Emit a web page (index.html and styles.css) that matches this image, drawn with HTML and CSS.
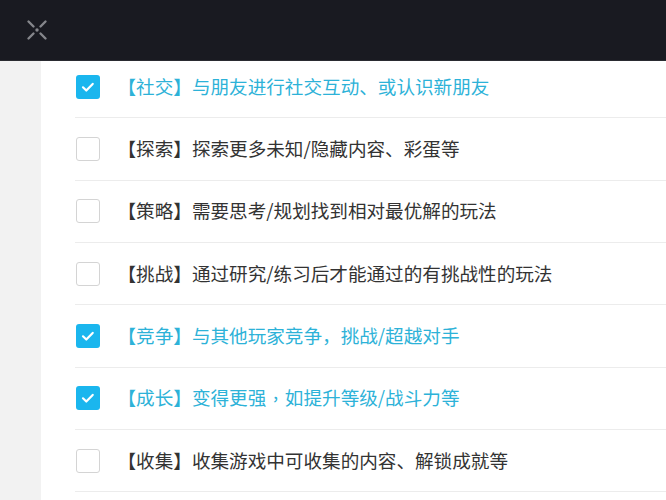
FILE: index.html
```html
<!DOCTYPE html>
<html lang="zh-CN">
<head>
<meta charset="utf-8">
<title>偏好选择</title>
<link rel="stylesheet" href="styles.css">
</head>
<body>
<header class="topbar">
  <button class="close-btn" aria-label="关闭">
    <svg width="24" height="24" viewBox="0 0 24 24">
      <g stroke="#85868b" stroke-width="2.4" stroke-linecap="round">
        <line x1="3.5" y1="3.5" x2="8.5" y2="8.5"/>
        <line x1="20.5" y1="3.5" x2="15.5" y2="8.5"/>
        <line x1="3.5" y1="20.5" x2="8.5" y2="15.5"/>
        <line x1="20.5" y1="20.5" x2="15.5" y2="15.5"/>
      </g>
      <circle cx="12" cy="12" r="1.7" fill="#85868b"/>
    </svg>
  </button>
</header>
<div class="layout">
  <aside class="side"></aside>
  <main class="content">
    <ul class="options">
      <li class="option checked">
        <span class="box"><svg viewBox="0 0 24 24" width="24" height="24"><path d="M7 12.3l3.3 3.2 6.4-6.6" fill="none" stroke="#fff" stroke-width="2.2" stroke-linecap="round" stroke-linejoin="round"/></svg></span>
        <span class="label">【社交】与朋友进行社交互动、或认识新朋友</span>
      </li>
      <li class="option">
        <span class="box"></span>
        <span class="label">【探索】探索更多未知/隐藏内容、彩蛋等</span>
      </li>
      <li class="option">
        <span class="box"></span>
        <span class="label">【策略】需要思考/规划找到相对最优解的玩法</span>
      </li>
      <li class="option">
        <span class="box"></span>
        <span class="label">【挑战】通过研究/练习后才能通过的有挑战性的玩法</span>
      </li>
      <li class="option checked">
        <span class="box"><svg viewBox="0 0 24 24" width="24" height="24"><path d="M7 12.3l3.3 3.2 6.4-6.6" fill="none" stroke="#fff" stroke-width="2.2" stroke-linecap="round" stroke-linejoin="round"/></svg></span>
        <span class="label">【竞争】与其他玩家竞争，挑战/超越对手</span>
      </li>
      <li class="option checked">
        <span class="box"><svg viewBox="0 0 24 24" width="24" height="24"><path d="M7 12.3l3.3 3.2 6.4-6.6" fill="none" stroke="#fff" stroke-width="2.2" stroke-linecap="round" stroke-linejoin="round"/></svg></span>
        <span class="label">【成长】变得更强<span class="mid-comma">,</span>如提升等级/战斗力等</span>
      </li>
      <li class="option">
        <span class="box"></span>
        <span class="label">【收集】收集游戏中可收集的内容、解锁成就等</span>
      </li>
    </ul>
  </main>
</div>
</body>
</html>
```
FILE: styles.css
```css
* {
  box-sizing: border-box;
}

html, body {
  margin: 0;
  padding: 0;
  height: 100%;
  overflow: hidden;
  background: #ffffff;
  font-family: "Noto Sans CJK SC", "Noto Sans", sans-serif;
}

/* dark title bar, pinned over the scrolled list */
.topbar {
  position: fixed;
  top: 0;
  left: 0;
  right: 0;
  height: 61px;
  background: #191a21;
  border-bottom: 1px solid #2a2b31;
  display: flex;
  align-items: center;
  padding-left: 25px;
  z-index: 2;
}

.close-btn {
  width: 24px;
  height: 24px;
  padding: 0;
  border: 0;
  background: none;
  display: flex;
}

.layout {
  display: flex;
  height: 100%;
  padding-top: 56px;
}

.side {
  width: 41px;
  flex: none;
  background: #f2f2f2;
}

.content {
  flex: 1;
  padding-left: 34px;
}

.options {
  list-style: none;
  margin: 0;
  padding: 0;
}

.option {
  display: flex;
  align-items: center;
  height: 62.33px;
  border-bottom: 1px solid #ececec;
  padding-left: 1px;
}

.box {
  width: 24px;
  height: 24px;
  flex: none;
  border: 1px solid #d4d4d4;
  border-radius: 3px;
  background: #ffffff;
  display: flex;
  align-items: center;
  justify-content: center;
}

.option.checked .box {
  border: 0;
  background: #1ab6ee;
}

.label {
  margin-left: 17.5px;
  font-size: 18.6px;
  line-height: 24px;
  color: #333333;
  white-space: nowrap;
  position: relative;
  top: -1px;
}

/* comma raised to mid height, centred in a full-width cell */
.mid-comma {
  display: inline-block;
  width: 1em;
  text-align: center;
  position: relative;
  top: -6px;
}

.option.checked .label {
  color: #2db2d8;
}
```
